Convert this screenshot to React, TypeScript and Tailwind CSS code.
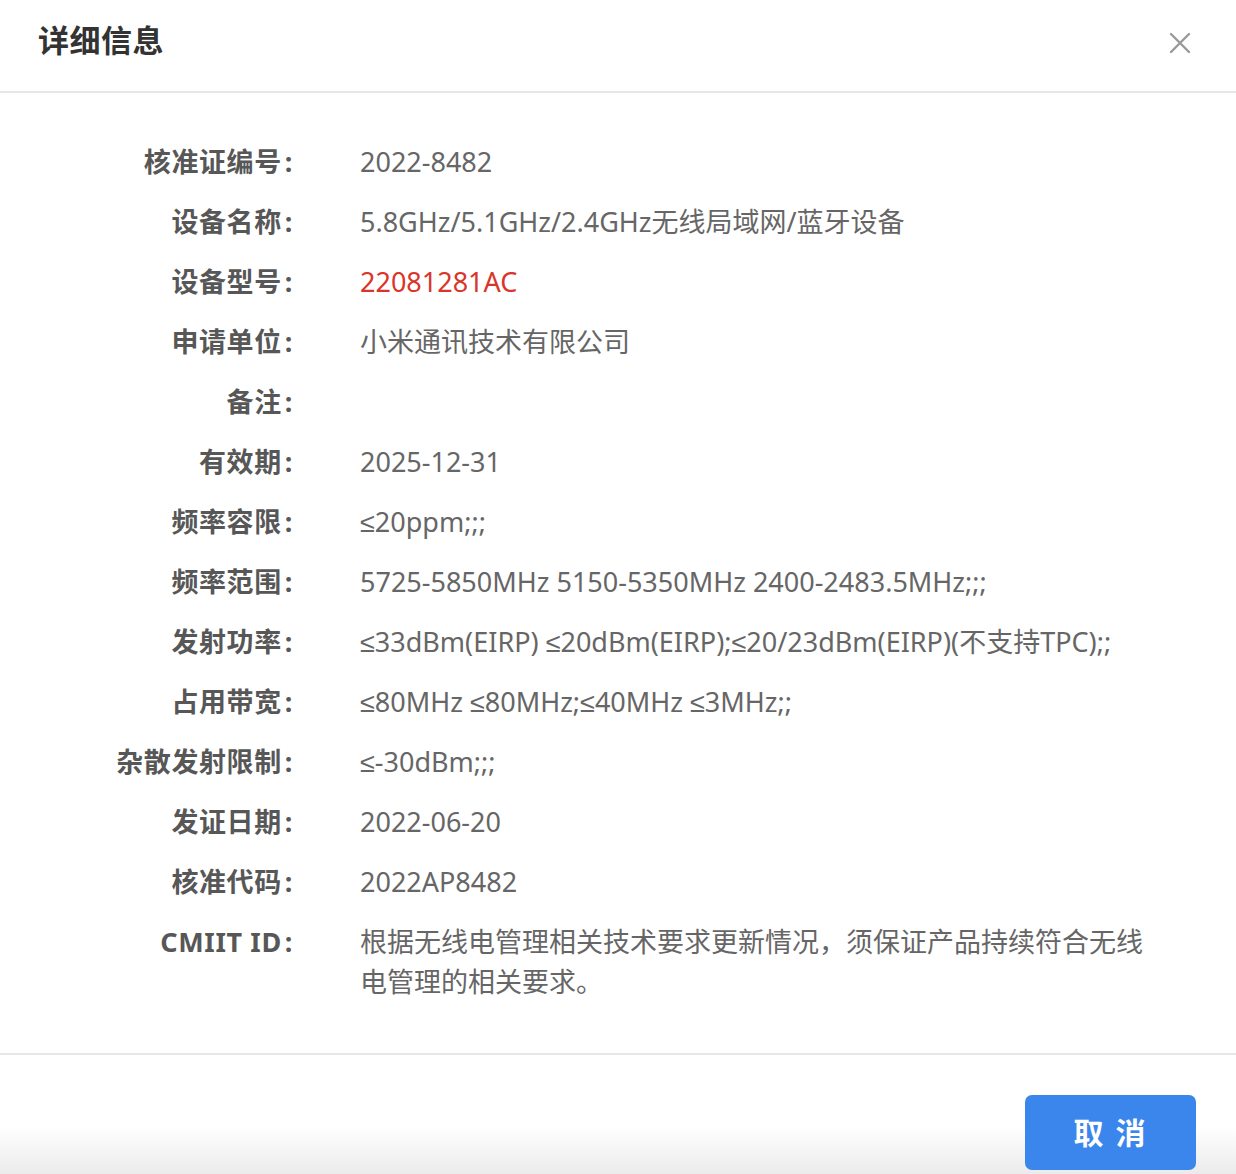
import React from 'react';

type Row = { label: string; value: string; red?: boolean };

// rows shown in the detail dialog
const rows: Row[] = [
  { label: '核准证编号', value: '2022-8482' },
  { label: '设备名称', value: '5.8GHz/5.1GHz/2.4GHz无线局域网/蓝牙设备' },
  { label: '设备型号', value: '22081281AC', red: true },
  { label: '申请单位', value: '小米通讯技术有限公司' },
  { label: '备注', value: '' },
  { label: '有效期', value: '2025-12-31' },
  { label: '频率容限', value: '≤20ppm;;;' },
  { label: '频率范围', value: '5725-5850MHz 5150-5350MHz 2400-2483.5MHz;;;' },
  { label: '发射功率', value: '≤33dBm(EIRP) ≤20dBm(EIRP);≤20/23dBm(EIRP)(不支持TPC);;' },
  { label: '占用带宽', value: '≤80MHz ≤80MHz;≤40MHz ≤3MHz;;' },
  { label: '杂散发射限制', value: '≤-30dBm;;;' },
  { label: '发证日期', value: '2022-06-20' },
  { label: '核准代码', value: '2022AP8482' },
  { label: 'CMIIT ID', value: '根据无线电管理相关技术要求更新情况，须保证产品持续符合无线电管理的相关要求。' },
];

// the CJK font draws ≤ slanted, so give that sign a latin font
const renderValue = (v: string) =>
  v.split('≤').map((part, i) => (
    <React.Fragment key={i}>
      {i > 0 && (
        <span className="leading-none" style={{ fontFamily: '"Liberation Sans", sans-serif' }}>
          ≤
        </span>
      )}
      {part}
    </React.Fragment>
  ));

const App: React.FC = () => {
  return (
    <div
      className="w-[1236px] h-[1174px] bg-white flex flex-col overflow-hidden"
      style={{ fontFamily: '"Noto Sans", "Noto Sans CJK SC", sans-serif' }}
    >
      {/* header */}
      <div className="h-[93px] flex items-center justify-between pl-[38px] pr-[44px] border-b-2 border-[#e6e6e6] shrink-0">
        <h1 className="text-[31px] font-bold text-[#333] tracking-[0.5px] -mt-[10px]">详细信息</h1>
        <button className="w-[24px] h-[24px] flex items-center justify-center -mt-[6px]">
          <svg width="22" height="22" viewBox="0 0 22 22" fill="none" stroke="#999" strokeWidth="2.4" strokeLinecap="round">
            <path d="M2 2L20 20M20 2L2 20" />
          </svg>
        </button>
      </div>

      {/* body */}
      <div className="pt-[49px] pb-[51px] border-b-2 border-[#e6e6e6] flex flex-col gap-[20px] shrink-0">
        {rows.map((r) => (
          <div key={r.label} className="flex">
            <div className="w-[293px] shrink-0 text-right text-[27px] leading-[40px] font-bold text-[#575757] tracking-[0.6px]">
              {r.label}
              <span className="ml-[3px]">:</span>
            </div>
            <div
              className={`ml-[67px] w-[800px] text-[27px] leading-[40px] min-h-[40px] ${
                r.red ? 'text-[#d9352b]' : 'text-[#666]'
              }`}
            >
              {renderValue(r.value)}
            </div>
          </div>
        ))}
      </div>

      {/* footer */}
      <div className="flex-1 flex justify-end items-start pt-[40px] pr-[40px] bg-linear-to-b from-white from-60% to-[#ebebeb]">
        <button className="w-[171px] h-[75px] rounded-[7px] bg-[#3a86ec] text-white text-[30px] font-bold tracking-[2px]">
          取 消
        </button>
      </div>
    </div>
  );
};

export default App;
